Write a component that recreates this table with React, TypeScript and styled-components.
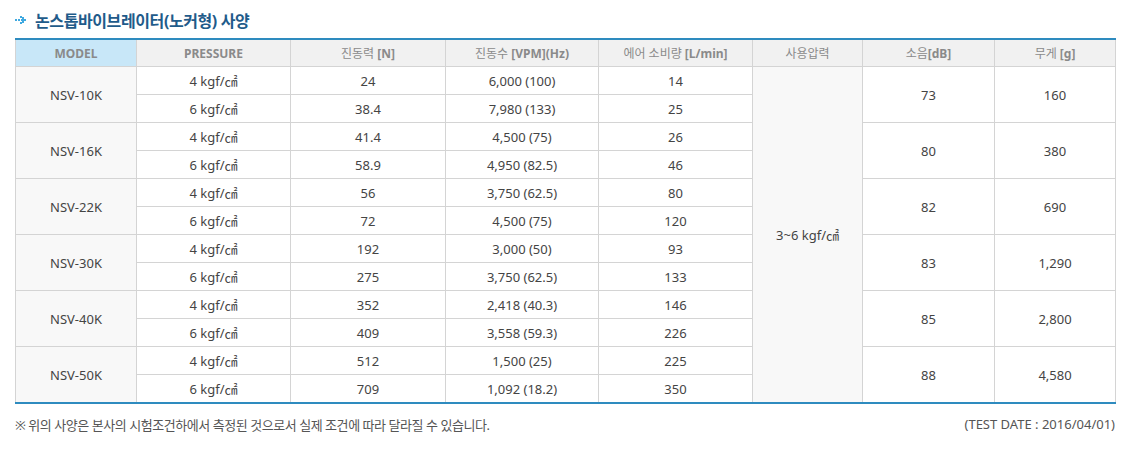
import styled, { createGlobalStyle } from "styled-components";

type Row = {
  model: string;
  noise: string;
  weight: string;
  lines: [string, string, string][];
};

const rows: Row[] = [
  { model: "NSV-10K", noise: "73", weight: "160", lines: [["24", "6,000 (100)", "14"], ["38.4", "7,980 (133)", "25"]] },
  { model: "NSV-16K", noise: "80", weight: "380", lines: [["41.4", "4,500 (75)", "26"], ["58.9", "4,950 (82.5)", "46"]] },
  { model: "NSV-22K", noise: "82", weight: "690", lines: [["56", "3,750 (62.5)", "80"], ["72", "4,500 (75)", "120"]] },
  { model: "NSV-30K", noise: "83", weight: "1,290", lines: [["192", "3,000 (50)", "93"], ["275", "3,750 (62.5)", "133"]] },
  { model: "NSV-40K", noise: "85", weight: "2,800", lines: [["352", "2,418 (40.3)", "146"], ["409", "3,558 (59.3)", "226"]] },
  { model: "NSV-50K", noise: "88", weight: "4,580", lines: [["512", "1,500 (25)", "225"], ["709", "1,092 (18.2)", "350"]] },
];

const widths = [121, 154, 155, 153, 154, 110, 132, 121];

export default function App() {
  return (
    <Page>
      <GlobalStyle />
      <Title>
        <svg width="12" height="10" viewBox="0 0 12 10">
          <g fill="#3fa9e0">
            <rect x="0" y="4" width="2" height="2" />
            <rect x="3" y="4" width="2" height="2" />
            <rect x="6" y="4" width="3" height="2" />
            <rect x="5" y="1" width="2" height="2" />
            <rect x="7" y="2" width="2" height="2" />
            <rect x="9" y="4" width="2" height="2" />
            <rect x="7" y="6" width="2" height="2" />
            <rect x="5" y="7" width="2" height="2" />
          </g>
        </svg>
        논스톱바이브레이터(노커형) 사양
      </Title>
      <Table>
        <colgroup>
          {widths.map((w, i) => (
            <col key={i} style={{ width: w }} />
          ))}
        </colgroup>
        <thead>
          <tr>
            <Th $model><b>MODEL</b></Th>
            <Th><b>PRESSURE</b></Th>
            <Th>진동력 <b>[N]</b></Th>
            <Th>진동수 <b>[VPM](Hz)</b></Th>
            <Th>에어 소비량 <b>[L/min]</b></Th>
            <Th>사용압력</Th>
            <Th>소음<b>[dB]</b></Th>
            <Th>무게 <b>[g]</b></Th>
          </tr>
        </thead>
        <tbody>
          {rows.map((r, gi) =>
            r.lines.map((l, li) => (
              <tr key={`${gi}-${li}`}>
                {li === 0 && <Td rowSpan={2} $shade>{r.model}</Td>}
                <Td>{li === 0 ? "4" : "6"} kgf/㎠</Td>
                <Td>{l[0]}</Td>
                <Td>{l[1]}</Td>
                <Td>{l[2]}</Td>
                {gi === 0 && li === 0 && (
                  <Td rowSpan={12} $shade>3~6 kgf/㎠</Td>
                )}
                {li === 0 && <Td rowSpan={2}>{r.noise}</Td>}
                {li === 0 && <Td rowSpan={2}>{r.weight}</Td>}
              </tr>
            ))
          )}
        </tbody>
      </Table>
      <Footer>
        <Note>※ 위의 사양은 본사의 시험조건하에서 측정된 것으로서 실제 조건에 따라 달라질 수 있습니다.</Note>
        <span>(TEST DATE : 2016/04/01)</span>
      </Footer>
    </Page>
  );
}

const GlobalStyle = createGlobalStyle`
  body {
    margin: 0;
    background: #fff;
    font-family: "Noto Sans", "Noto Sans CJK KR", sans-serif;
  }
`;

const Page = styled.div`
  width: 1100px;
  padding: 9px 0 0 15px;
`;

const Title = styled.h2`
  display: flex;
  align-items: center;
  gap: 8px;
  margin: 0 0 8px;
  height: 21px;
  font-size: 16px;
  font-weight: bold;
  color: #1f5b8a;
  letter-spacing: -0.4px;
  svg {
    margin-top: 1px;
  }
`;

const Table = styled.table`
  width: 1100px;
  table-layout: fixed;
  border-collapse: collapse;
  border-top: 2px solid #2e8bbf;
  border-bottom: 2px solid #2e8bbf;
  font-size: 13px;
  color: #444;
`;

const Th = styled.th<{ $model?: boolean }>`
  height: 26px;
  padding: 0;
  border: 1px solid #d4d4d4;
  border-top: none;
  background: ${({ $model }) => ($model ? "#c8e7f8" : "#f1f1f1")};
  color: #8a8a8a;
  font-size: 12px;
  font-weight: normal;
  text-align: center;
  b {
    font-weight: bold;
  }
`;

const Td = styled.td<{ $shade?: boolean }>`
  height: 27px;
  padding: 0;
  border: 1px solid #d4d4d4;
  background: ${({ $shade }) => ($shade ? "#f8f8f8" : "#fff")};
  text-align: center;
  vertical-align: middle;
`;

const Footer = styled.div`
  display: flex;
  justify-content: space-between;
  margin-top: 11px;
  font-size: 13px;
  color: #555;
`;

const Note = styled.span`
  letter-spacing: -0.45px;
`;
